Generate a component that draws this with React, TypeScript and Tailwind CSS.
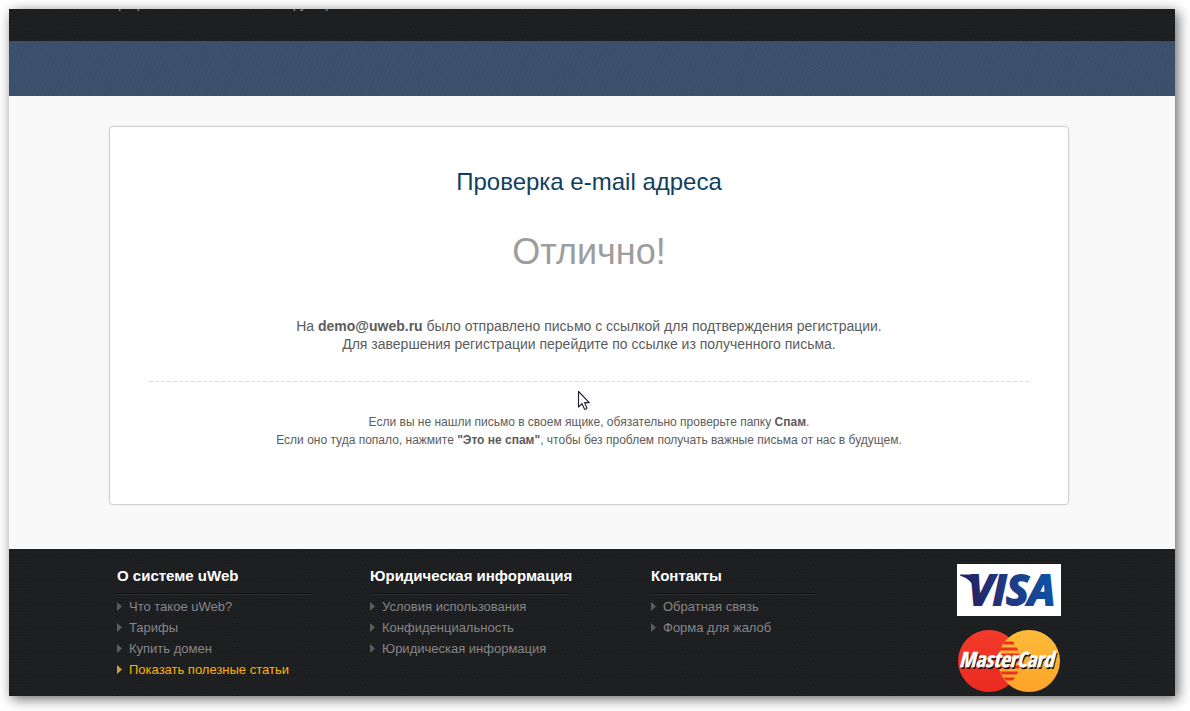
type FooterLink = { label: string; highlighted?: boolean };

type FooterColumn = {
  title: string;
  width: string;
  links: FooterLink[];
};

const columns: FooterColumn[] = [
  {
    title: "О системе uWeb",
    width: "w-[195px] mr-[58px]",
    links: [
      { label: "Что такое uWeb?" },
      { label: "Тарифы" },
      { label: "Купить домен" },
      { label: "Показать полезные статьи", highlighted: true },
    ],
  },
  {
    title: "Юридическая информация",
    width: "w-[199px] mr-[82px]",
    links: [
      { label: "Условия использования" },
      { label: "Конфиденциальность" },
      { label: "Юридическая информация" },
    ],
  },
  {
    title: "Контакты",
    width: "w-[165px]",
    links: [{ label: "Обратная связь" }, { label: "Форма для жалоб" }],
  },
];

function Arrow() {
  return (
    <svg className="h-[9px] w-[5px] shrink-0" viewBox="0 0 5 9" fill="currentColor" aria-hidden="true">
      <path d="M0 0 L5 4.5 L0 9 Z" />
    </svg>
  );
}

function VisaLogo() {
  return (
    <svg className="block h-[52px] w-[104px] overflow-visible bg-white" viewBox="0 0 104 52" role="img" aria-label="VISA">
      <defs>
        <linearGradient id="visa" gradientUnits="userSpaceOnUse" x1="3" y1="40" x2="101" y2="12">
          <stop offset="0" stopColor="#221c5f" />
          <stop offset="0.45" stopColor="#21377f" />
          <stop offset="1" stopColor="#0a57ab" />
        </linearGradient>
      </defs>
      <path d="M3 10.5 H14 Q19 10.5 20 14 L23 30 L19 26 Q14 15 3 11.5 Z" fill="url(#visa)" />
      <text
        x="11"
        y="41"
        className="font-['Open_Sans',sans-serif] text-[42px] font-bold italic"
        fill="url(#visa)"
        stroke="url(#visa)"
        strokeWidth="2"
      >
        VISA
      </text>
    </svg>
  );
}

function MasterCardLogo() {
  return (
    <svg className="block h-[64px] w-[104px]" viewBox="0 0 104 64" role="img" aria-label="MasterCard">
      <defs>
        <linearGradient id="mc-red" x1="0" y1="0" x2="0" y2="1">
          <stop offset="0" stopColor="#f23b2b" />
          <stop offset="1" stopColor="#ec2a20" />
        </linearGradient>
        <linearGradient id="mc-yellow" x1="0" y1="0" x2="0" y2="1">
          <stop offset="0" stopColor="#fdbb3a" />
          <stop offset="1" stopColor="#fda428" />
        </linearGradient>
        <clipPath id="mc-lens">
          <circle cx="32" cy="32" r="31" />
        </clipPath>
      </defs>
      <circle cx="32" cy="32" r="31" fill="url(#mc-red)" />
      <circle cx="72" cy="32" r="31" fill="url(#mc-yellow)" />
      <g clipPath="url(#mc-lens)" fill="#ee3024">
        <path d="M48 12.5H57V15.5H46ZM44 18.5H61V21.5H42ZM42 24.5H64V27.5H41ZM41 30.5H64V33.5H41ZM41 36.5H64V39.5H42ZM43 42.5H62V45.5H45ZM46 48.5H58V51.5H49Z" />
      </g>
      <g className="font-['Liberation_Sans_Narrow','Open_Sans_Condensed','Open_Sans',sans-serif] text-[21px] font-bold italic">
        <text x="3" y="40" fill="#17120f">
          MasterCard
        </text>
        <text x="2" y="38" fill="#ffffff" stroke="#ffffff" strokeWidth="0.5">
          MasterCard
        </text>
      </g>
    </svg>
  );
}

function Cursor() {
  return (
    <svg
      className="pointer-events-none absolute top-[9px] left-1/2 -ml-3 h-[21px] w-[14px]"
      viewBox="0 0 14 21"
      aria-hidden="true"
    >
      <path
        d="M1.5 1.5V17L5 13.7L7.6 19.2Q9 19.6 9.9 18L7.6 12.6H12.3Z"
        fill="#ffffff"
        stroke="#1b1b26"
        strokeWidth="1.1"
        strokeLinejoin="round"
      />
    </svg>
  );
}

function Column({ title, width, links }: FooterColumn) {
  return (
    <div className={`shrink-0 ${width}`}>
      <h2 className="text-[15px] leading-5 font-bold whitespace-nowrap text-white">{title}</h2>
      <div className="mt-[7px] mb-px h-[2px] border-t border-b border-t-[#111214] border-b-[#2c2d2f]" />
      <ul>
        {links.map((link) => (
          <li key={link.label}>
            <a
              href="#"
              className={`flex items-center gap-[7px] text-[13px] leading-[21px] whitespace-nowrap ${
                link.highlighted ? "text-[#fbb300]" : "text-[#858688]"
              }`}
            >
              <span className={link.highlighted ? "text-[#c9a03c]" : "text-[#5b5c5e]"}>
                <Arrow />
              </span>
              {link.label}
            </a>
          </li>
        ))}
      </ul>
    </div>
  );
}

export default function App() {
  return (
    <div className="min-h-screen bg-white pt-[9px] pr-[15px] pb-[15px] pl-[9px] font-['Liberation_Sans',Arial,sans-serif]">
      <div className="bg-[#f9f9f9] shadow-[3px_3px_12px_rgba(0,0,0,0.6)]">
        <header>
          <div className="h-8 overflow-hidden bg-[#1e1f21] bg-[repeating-linear-gradient(0deg,rgba(0,0,0,0.09)_0_1px,transparent_1px_3px),repeating-linear-gradient(60deg,rgba(255,255,255,0.01)_0_1px,transparent_1px_4px)] pr-[6px]">
            <p className="mx-auto -mt-[13px] max-w-[960px] text-[13px] leading-4 text-[#9a9a9a]">
              Профессиональный веб-конструктор
            </p>
          </div>
          <div className="h-[55px] bg-[#3b4f6b] bg-[repeating-linear-gradient(35deg,rgba(255,255,255,0.02)_0_1px,transparent_1px_3px),repeating-linear-gradient(110deg,rgba(0,0,0,0.03)_0_1px,transparent_1px_4px)]" />
        </header>

        <main className="pt-[30px] pr-[6px] pb-11">
          <section className="mx-auto max-w-[960px] rounded border border-[#d2d2d2] bg-white px-[39px] pt-[39px] pb-[55px] text-center text-[#5c5c5c] shadow-[0_0_3px_rgba(0,0,0,0.08)]">
            <h1 className="text-2xl text-[#11405f]">Проверка e-mail адреса</h1>
            <p className="mt-8 text-4xl leading-[44px] text-[#9d9d9d]">Отлично!</p>
            <p className="mt-[43px] text-sm leading-[18px]">
              На <b>demo@uweb.ru</b> было отправлено письмо с ссылкой для подтверждения регистрации.
              <br />
              Для завершения регистрации перейдите по ссылке из полученного письма.
            </p>
            <div className="relative mt-7">
              <hr className="h-px border-0 bg-[repeating-linear-gradient(90deg,#dedede_0_4px,transparent_4px_6px)]" />
              <Cursor />
            </div>
            <p className="mt-[31px] text-xs leading-[18px]">
              Если вы не нашли письмо в своем ящике, обязательно проверьте папку <b>Спам</b>.
              <br />
              Если оно туда попало, нажмите <b>"Это не спам"</b>, чтобы без проблем получать важные письма от нас в
              будущем.
            </p>
          </section>
        </main>

        <footer className="bg-[#1e1f21] bg-[repeating-linear-gradient(0deg,rgba(0,0,0,0.09)_0_1px,transparent_1px_3px),repeating-linear-gradient(60deg,rgba(255,255,255,0.01)_0_1px,transparent_1px_4px)] pr-[6px]">
          <div className="mx-auto flex max-w-[960px] px-2 pt-[15px] pb-[3px]">
            <nav className="flex pt-[2px]" aria-label="Разделы">
              {columns.map((column) => (
                <Column key={column.title} {...column} />
              ))}
            </nav>
            <div className="ml-auto flex flex-col gap-[13px]">
              <VisaLogo />
              <MasterCardLogo />
            </div>
          </div>
        </footer>
      </div>
    </div>
  );
}
